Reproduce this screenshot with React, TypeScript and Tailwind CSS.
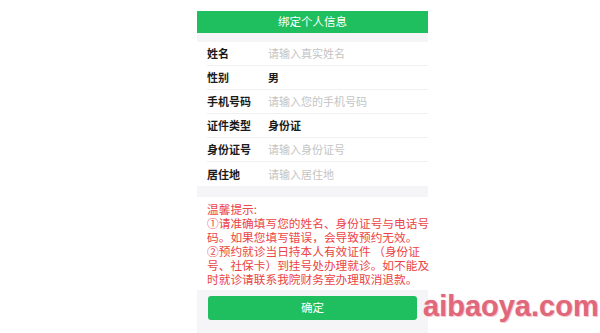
import React from 'react';

const rows: { label: string; value: string; filled?: boolean }[] = [
  { label: '姓名', value: '请输入真实姓名' },
  { label: '性别', value: '男', filled: true },
  { label: '手机号码', value: '请输入您的手机号码' },
  { label: '证件类型', value: '身份证', filled: true },
  { label: '身份证号', value: '请输入身份证号' },
  { label: '居住地', value: '请输入居住地' },
];

const tips = [
  '温馨提示:',
  '①请准确填写您的姓名、身份证号与电话号',
  '码。如果您填写错误，会导致预约无效。',
  '②预约就诊当日持本人有效证件 （身份证',
  '号、社保卡）到挂号处办理就诊。如不能及',
  '时就诊请联系我院财务室办理取消退款。',
];

const App: React.FC = () => {
  return (
    <div
      className="relative w-[600px] h-[333px] overflow-hidden bg-white"
      style={{ fontFamily: '"Noto Sans CJK SC", "Noto Sans", sans-serif' }}
    >
      <div className="ml-[197px] w-[231px] pt-[11px]">
        <div className="h-[22px] bg-[#1fbf5f] flex items-center justify-center text-white text-[11.5px]">
          绑定个人信息
        </div>
        <div className="h-[9px] bg-[#f5f5f7]" />
        <div>
          {rows.map((r, i) => (
            <div key={r.label} className="pl-[10px]">
              <div
                className={`h-[24px] flex items-center text-[11px] ${i < rows.length - 1 ? 'border-b border-[#f0f0f0]' : ''}`}
              >
                <span className="w-[61px] font-bold text-[#1a1a1a]">{r.label}</span>
                <span className={r.filled ? 'font-semibold text-[#1a1a1a]' : 'text-[#c4c4c4]'}>{r.value}</span>
              </div>
            </div>
          ))}
        </div>
        <div className="h-[11px] bg-[#f5f5f7]" />
        <div className="pl-[10px] pt-[5px] pb-[4px] text-[11.7px] leading-[14px] text-[#ec4444] whitespace-nowrap">
          {tips.map((t) => (
            <div key={t}>{t}</div>
          ))}
        </div>
        <div className="h-[60px] bg-[#f5f5f7] pt-[6px] px-[11px]">
          <div className="h-[24px] rounded-[3px] bg-[#1fbf5f] flex items-center justify-center text-white text-[11.5px]">
            确定
          </div>
        </div>
      </div>
      <div
        className="absolute left-[423px] top-[285px] text-[29px] font-bold text-[#e0687a]"
        style={{
          fontFamily: '"Liberation Sans", Arial, sans-serif',
          textShadow: '0 0 1px #f4b9c1, 1px 1px 0 #f6c8ce',
        }}
      >
        aibaoya.com
      </div>
    </div>
  );
};

export default App;
